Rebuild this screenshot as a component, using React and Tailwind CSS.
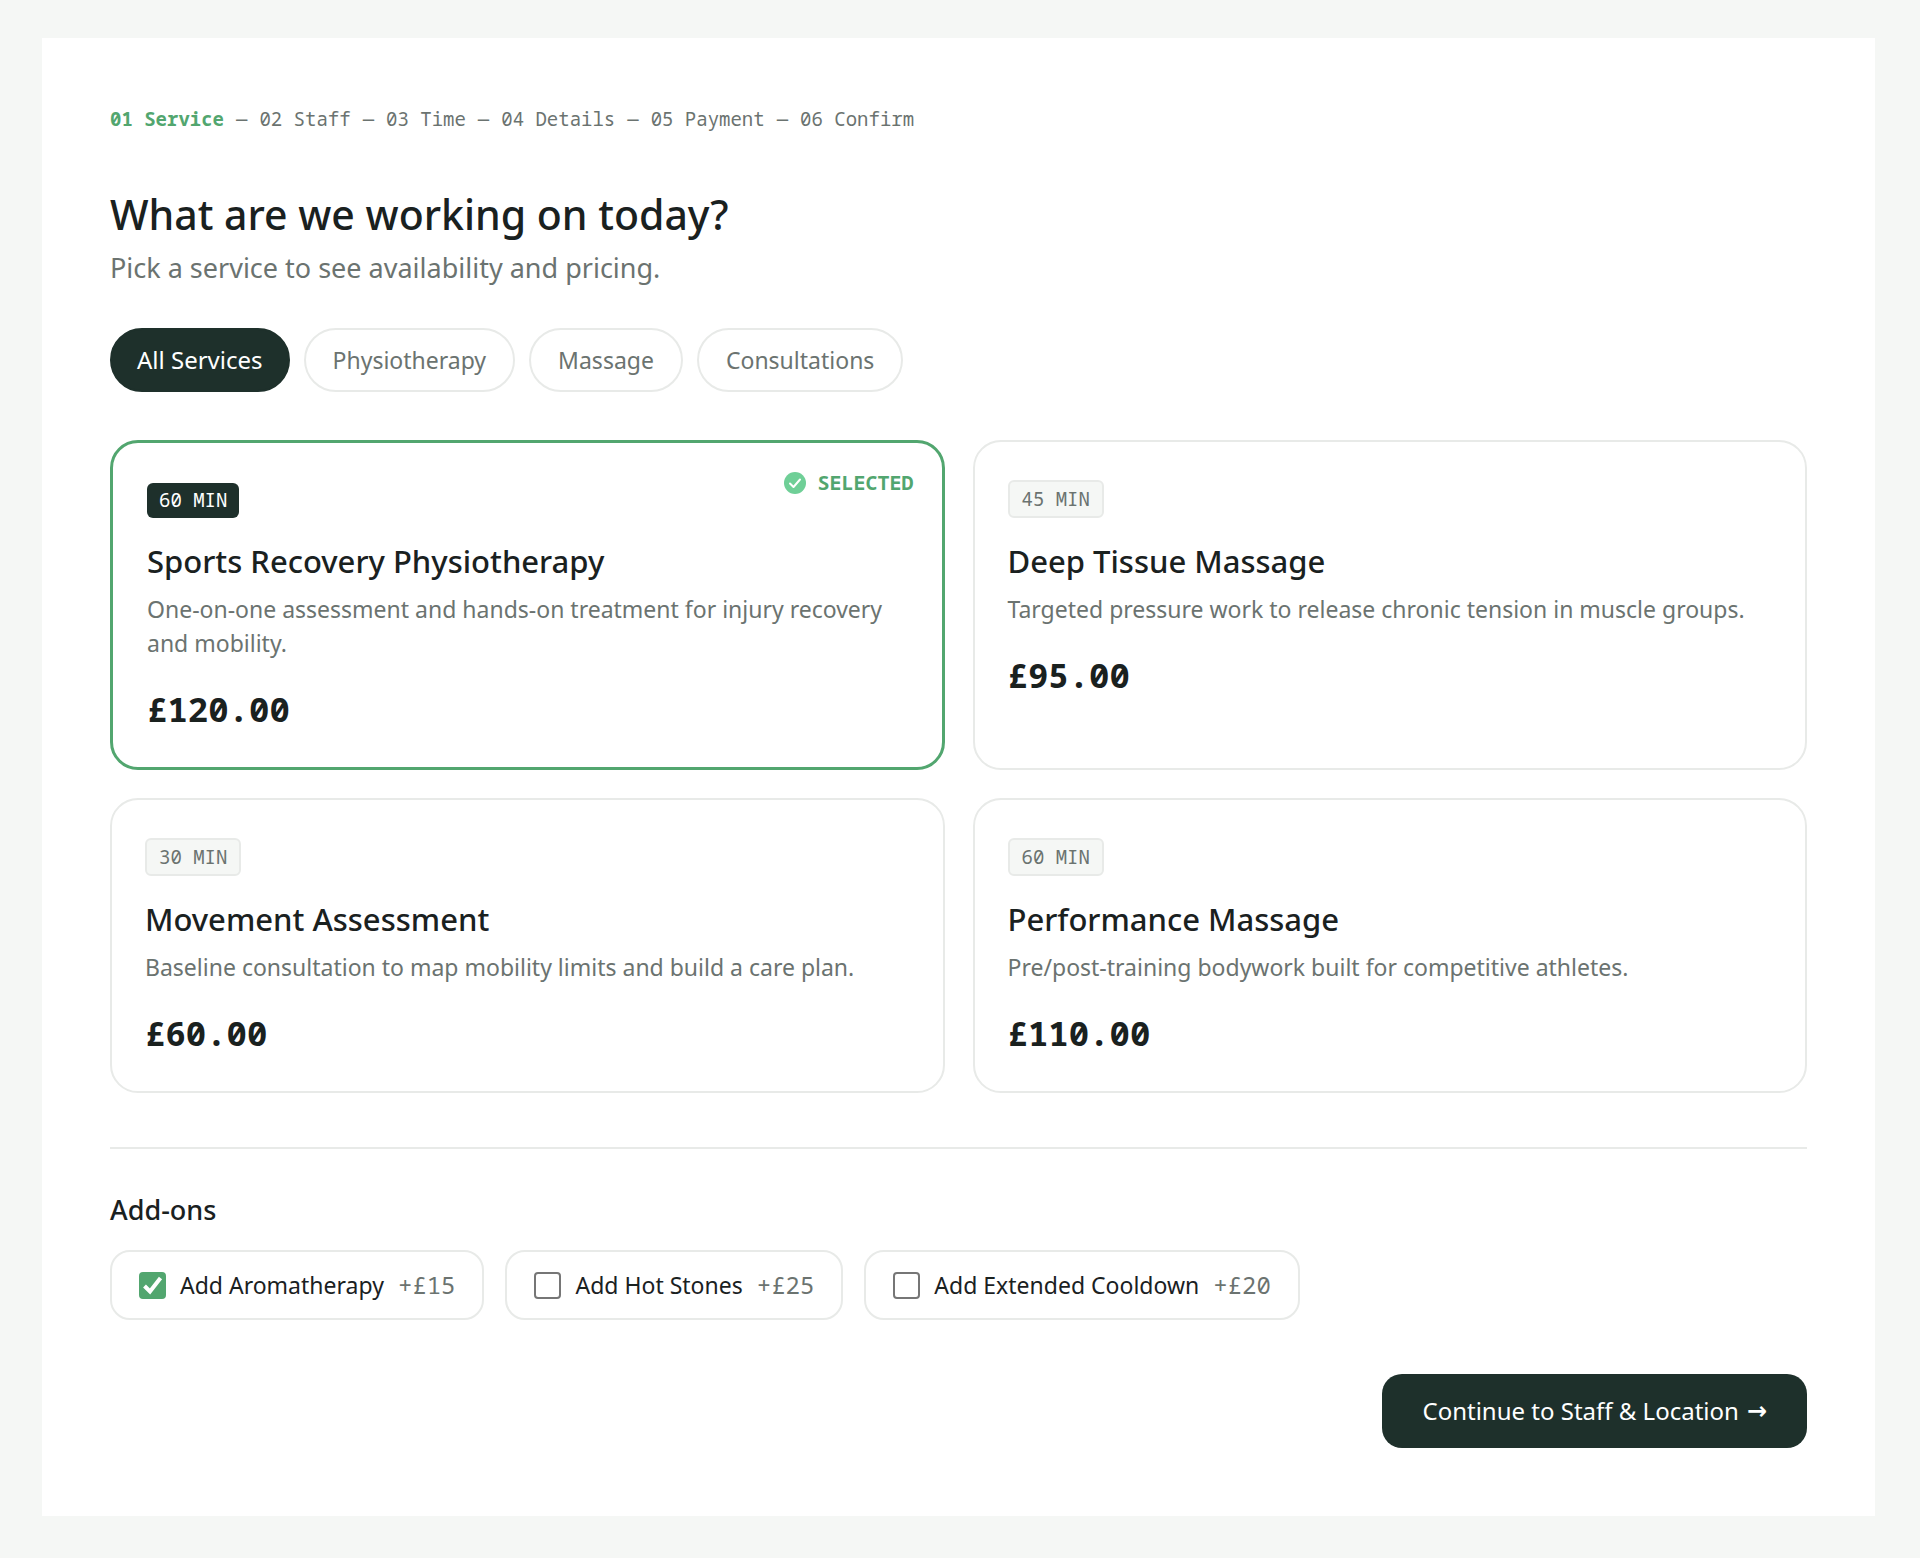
import { useState } from 'react';

const sans = "font-['Noto_Sans','Open_Sans',sans-serif]";
const mono = "font-['Noto_Sans_Mono','DejaVu_Sans_Mono',monospace]";

const steps = ['01 Service', '02 Staff', '03 Time', '04 Details', '05 Payment', '06 Confirm'];

const filters = ['All Services', 'Physiotherapy', 'Massage', 'Consultations'];

const services = [
  {
    id: 'sports-recovery',
    duration: '60 MIN',
    name: 'Sports Recovery Physiotherapy',
    description: 'One-on-one assessment and hands-on treatment for injury recovery and mobility.',
    price: '£120.00'
  },
  {
    id: 'deep-tissue',
    duration: '45 MIN',
    name: 'Deep Tissue Massage',
    description: 'Targeted pressure work to release chronic tension in muscle groups.',
    price: '£95.00'
  },
  {
    id: 'movement',
    duration: '30 MIN',
    name: 'Movement Assessment',
    description: 'Baseline consultation to map mobility limits and build a care plan.',
    price: '£60.00'
  },
  {
    id: 'performance',
    duration: '60 MIN',
    name: 'Performance Massage',
    description: 'Pre/post-training bodywork built for competitive athletes.',
    price: '£110.00'
  }
];

const addOns = [
  { id: 'aromatherapy', label: 'Add Aromatherapy', price: '+£15' },
  { id: 'hot-stones', label: 'Add Hot Stones', price: '+£25' },
  { id: 'cooldown', label: 'Add Extended Cooldown', price: '+£20' }
];

const ServiceCard = ({ service, selected, onSelect }) => (
  <button
    type="button"
    aria-pressed={selected}
    onClick={onSelect}
    className={`relative flex flex-col items-start rounded-[28px] text-left cursor-pointer ${
      selected ? 'border-3 border-[#52a66f] px-[34px] pt-10 pb-[38px]' : 'border-2 border-[#e8eae8] px-[33px] pt-[38px] pb-[38px]'
    }`}
  >
    {selected && (
      <span className={`absolute top-7 right-7 flex items-center gap-3 text-[20px] leading-6 font-bold text-[#52a66f] ${mono}`}>
        <svg width="22" height="22" viewBox="0 0 22 22" fill="none" aria-hidden="true">
          <circle cx="11" cy="11" r="11" fill="#6fcf97" />
          <path d="M6 11.5l3.5 3.5 6.5-7.5" stroke="#fff" strokeWidth="2" strokeLinecap="round" strokeLinejoin="round" />
        </svg>
        SELECTED
      </span>
    )}
    <span
      className={`rounded-md px-3 text-[19px] ${mono} ${
        selected
          ? 'bg-[#1e302b] leading-[35px] text-white'
          : 'border-2 border-[#e8eae8] bg-[#f5f7f5] leading-[34px] text-[#6b7370]'
      }`}
    >
      {service.duration}
    </span>
    <span className="mt-[22px] text-[31px] leading-[42px] font-medium text-[#1a211f]">{service.name}</span>
    <span className="mt-[10px] text-[23px] leading-[34px] text-[#6b7370]">{service.description}</span>
    <span className={`mt-[29px] text-[34px] leading-10 font-bold text-[#1a211f] ${mono}`}>{service.price}</span>
  </button>
);

const AddOn = ({ addOn, checked, onChange }) => (
  <label className="flex items-center gap-[14px] rounded-[20px] border-2 border-[#e8eae8] px-[27px] py-4 text-[23px] leading-[34px] text-[#1a211f] cursor-pointer">
    <span className="grid">
      <input
        type="checkbox"
        checked={checked}
        onChange={onChange}
        className="col-start-1 row-start-1 size-[27px] appearance-none rounded-[4px] border-2 border-[#767676] bg-white checked:border-[#52a66f] checked:bg-[#52a66f]"
      />
      {checked && (
        <svg className="col-start-1 row-start-1 size-[27px] pointer-events-none" viewBox="0 0 27 27" fill="none" aria-hidden="true">
          <path d="M5.5 14l5.5 5.5L21.5 6" stroke="#fff" strokeWidth="4" />
        </svg>
      )}
    </span>
    {addOn.label}
    <span className={`text-[24px] text-[#6b7370] ${mono}`}>{addOn.price}</span>
  </label>
);

const App = () => {
  const [filter, setFilter] = useState('All Services');
  const [selectedId, setSelectedId] = useState('sports-recovery');
  const [chosenAddOns, setChosenAddOns] = useState(['aromatherapy']);

  const toggleAddOn = (id) => {
    setChosenAddOns((prev) => (prev.includes(id) ? prev.filter((item) => item !== id) : [...prev, id]));
  };

  return (
    <div className={`min-h-screen bg-[#f5f7f5] pt-[38px] pr-[45px] pb-[42px] pl-[42px] ${sans}`}>
      <main className="bg-white px-[68px] pt-17 pb-17">
        {/* Booking steps */}
        <nav aria-label="Booking steps">
          <ol className={`flex flex-wrap gap-3 text-[19px] leading-[26px] text-[#6b7370] ${mono}`}>
            {steps.map((step, index) => (
              <li key={step} className="flex gap-3">
                {index > 0 && <span>—</span>}
                <span className={index === 0 ? 'font-bold text-[#52a66f]' : ''}>{step}</span>
              </li>
            ))}
          </ol>
        </nav>

        <h1 className="mt-[54px] text-[41px] leading-[56px] font-medium text-[#1a211f]">What are we working on today?</h1>
        <p className="mt-2 text-[27px] leading-9 text-[#6b7370]">Pick a service to see availability and pricing.</p>

        {/* Category filter */}
        <div className="mt-[42px] flex flex-wrap gap-[14px]">
          {filters.map((name) => (
            <button
              key={name}
              type="button"
              onClick={() => setFilter(name)}
              className={`rounded-full border-2 py-[14px] leading-8 cursor-pointer ${
                filter === name
                  ? 'border-[#1e302b] bg-[#1e302b] px-[25px] text-[24px] text-white'
                  : 'border-[#e8eae8] px-[27px] text-[23px] text-[#6b7370]'
              }`}
            >
              {name}
            </button>
          ))}
        </div>

        {/* Services */}
        <div className="mt-12 grid grid-cols-1 gap-7 md:grid-cols-2">
          {services.map((service) => (
            <ServiceCard
              key={service.id}
              service={service}
              selected={service.id === selectedId}
              onSelect={() => setSelectedId(service.id)}
            />
          ))}
        </div>

        <hr className="mt-[54px] border-t-2 border-[#e8eae8]" />

        {/* Add-ons */}
        <h2 className="mt-[43px] text-[27px] leading-9 font-medium text-[#1a211f]">Add-ons</h2>
        <div className="mt-[22px] flex flex-wrap gap-[21px]">
          {addOns.map((addOn) => (
            <AddOn
              key={addOn.id}
              addOn={addOn}
              checked={chosenAddOns.includes(addOn.id)}
              onChange={() => toggleAddOn(addOn.id)}
            />
          ))}
        </div>

        <div className="mt-[54px] flex justify-end">
          <button type="button" className="flex items-center gap-2 rounded-[20px] bg-[#1e302b] px-10 py-5 text-[24px] leading-[34px] text-white cursor-pointer">
            Continue to Staff &amp; Location
            <span className="font-['DejaVu_Sans'] font-bold">→</span>
          </button>
        </div>
      </main>
    </div>
  );
};

export default App;
